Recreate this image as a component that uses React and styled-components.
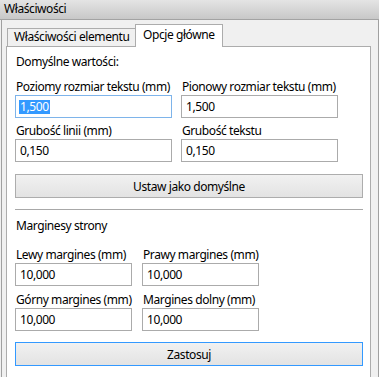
import styled, { createGlobalStyle } from "styled-components";

const GlobalStyle = createGlobalStyle`
  html, body {
    margin: 0;
    padding: 0;
    overflow: hidden;
    background: #f0f0f0;
  }
  body {
    font-family: "Noto Sans", "Open Sans", sans-serif;
    font-size: 12px;
    letter-spacing: -0.42px;
    color: #000;
  }
`;

const defaults = [
  { label: "Poziomy rozmiar tekstu (mm)", value: "1,500", focused: true },
  { label: "Pionowy rozmiar tekstu (mm)", value: "1,500" },
  { label: "Grubość linii (mm)", value: "0,150" },
  { label: "Grubość tekstu", value: "0,150" },
];

const margins = [
  { label: "Lewy margines (mm)", value: "10,000" },
  { label: "Prawy margines (mm)", value: "10,000" },
  { label: "Górny margines (mm)", value: "10,000" },
  { label: "Margines dolny (mm)", value: "10,000" },
];

const Field = ({ label, value, focused }) => (
  <div>
    <Label>{label}</Label>
    <TextBox $focused={focused}>
      {focused ? <Selected>{value}</Selected> : value}
    </TextBox>
  </div>
);

const App = () => {
  return (
    <>
      <GlobalStyle />
      <TitleBar>Właściwości</TitleBar>
      <Body>
        <TabStrip>
          <Tab $width={129}>Właściwości elementu</Tab>
          <ActiveTab $width={88}>Opcje główne</ActiveTab>
        </TabStrip>
        <Panel>
          <Heading>Domyślne wartości:</Heading>
          <Grid $col={157} $gap={9} $rowGap={4} $top={8}>
            {defaults.map((f) => (
              <Field key={f.label} {...f} />
            ))}
          </Grid>
          <Button $top={12}>Ustaw jako domyślne</Button>
          <Separator />
          <Heading $top={7}>Marginesy strony</Heading>
          <Grid $col={117} $gap={10} $rowGap={5} $top={12}>
            {margins.map((f) => (
              <Field key={f.label} {...f} />
            ))}
          </Grid>
          <Button $top={11} $default>Zastosuj</Button>
        </Panel>
      </Body>
    </>
  );
};

const TitleBar = styled.div`
  height: 19px;
  line-height: 18px;
  padding-left: 4px;
  border-bottom: 1px solid #a3a3a3;
  background: linear-gradient(#e4e4e4, #c8c8c8);
`;

const Body = styled.div`
  box-sizing: border-box;
  width: 378px;
  margin-left: 1px;
  padding: 4px 7px 0 4px;
  border-left: 1px solid #a0a0a0;
  border-right: 1px solid #a0a0a0;
`;

const TabStrip = styled.div`
  display: flex;
  align-items: flex-end;
  height: 23px;
  padding-left: 1px;
  margin-bottom: -1px;
  position: relative;
  z-index: 1;
`;

const Tab = styled.div`
  box-sizing: border-box;
  width: ${(p) => p.$width}px;
  height: 19px;
  padding-left: 6px;
  line-height: 16px;
  border: 1px solid #acacac;
  background: #f0f0f0;
  white-space: nowrap;
`;

const ActiveTab = styled(Tab)`
  height: 23px;
  margin-left: -1px;
  padding-top: 2px;
  padding-left: 7px;
  border-bottom: none;
  background: #fff;
`;

const Panel = styled.div`
  display: flex;
  flex-direction: column;
  padding: 6px 7px 20px 8px;
  border: 1px solid #acacac;
  background: #fff;
`;

const Heading = styled.div`
  margin-top: ${(p) => p.$top || 0}px;
  margin-left: 1px;
  line-height: 17px;
`;

const Grid = styled.div`
  display: grid;
  grid-template-columns: repeat(2, ${(p) => p.$col}px);
  column-gap: ${(p) => p.$gap}px;
  row-gap: ${(p) => p.$rowGap}px;
  margin-top: ${(p) => p.$top}px;
`;

const Label = styled.div`
  margin-left: 1px;
  line-height: 17px;
  white-space: nowrap;
`;

const TextBox = styled.div`
  box-sizing: border-box;
  display: flex;
  align-items: center;
  height: 23px;
  padding-left: 4px;
  border: 1px solid ${(p) => (p.$focused ? "#7eb4ea" : "#ababab")};
  background: #fff;
`;

const Selected = styled.span`
  margin-left: -1px;
  padding: 0 1px;
  line-height: 14px;
  background: #3399ff;
  color: #fff;
`;

const Button = styled.button`
  box-sizing: border-box;
  height: 24px;
  margin-top: ${(p) => p.$top}px;
  font: inherit;
  letter-spacing: inherit;
  color: #000;
  border: 1px solid ${(p) => (p.$default ? "#3399ff" : "#adadad")};
  background: linear-gradient(#f1f1f1, #e3e3e3);
  padding: 0;
`;

const Separator = styled.div`
  height: 1px;
  margin-top: 11px;
  background: #a8a8a8;
`;

export default App;
